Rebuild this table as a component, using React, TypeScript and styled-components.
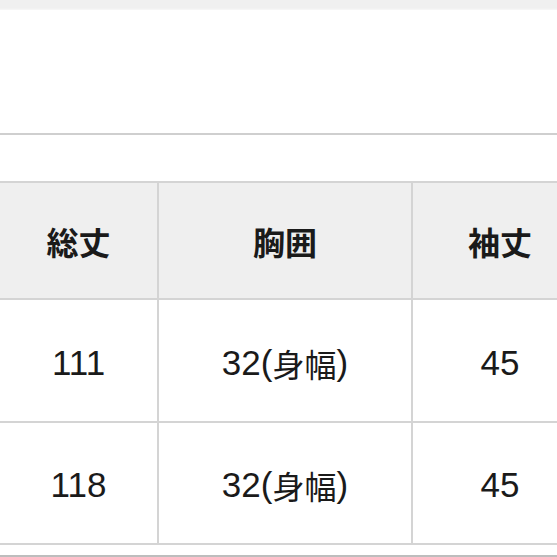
import React from 'react'
import styled, { createGlobalStyle } from 'styled-components'

const GlobalStyle = createGlobalStyle`
  html, body {
    margin: 0;
    padding: 0;
    background: #fff;
    overflow: hidden;
  }
  body {
    font-family: "Liberation Sans", "Noto Sans CJK JP", sans-serif;
    color: #1c1c1c;
  }
`

const Page = styled.div`
  width: 557px;
  height: 557px;
  overflow: hidden;
  display: flex;
  flex-direction: column;
`

const TopBand = styled.div`
  height: 10px;
  background: linear-gradient(#f0f0f0 80%, #f8f8f8);
  flex-shrink: 0;
`

const Space = styled.div<{ $h: number }>`
  height: ${(p) => p.$h}px;
  flex-shrink: 0;
`

const Rule = styled.div<{ $color?: string }>`
  height: 2px;
  background: ${(p) => p.$color || '#cfcfcf'};
  flex-shrink: 0;
`

const Grid = styled.div`
  display: grid;
  grid-template-columns: 157px 252px 174px;
  grid-template-rows: 115px 121px 120px;
  gap: 2px;
  padding: 2px 0;
  background: #d4d4d4;
  width: 587px;
  flex-shrink: 0;
`

const Cell = styled.div<{ $head?: boolean }>`
  display: flex;
  align-items: center;
  justify-content: center;
  background: ${(p) => (p.$head ? '#efefef' : '#ffffff')};
  font-family: ${(p) =>
    p.$head ? '"Noto Sans CJK JP", sans-serif' : '"Liberation Sans", "Noto Sans CJK JP", sans-serif'};
  font-size: ${(p) => (p.$head ? '32px' : '35px')};
  font-weight: ${(p) => (p.$head ? 700 : 400)};
  color: #1a1a1a;
  padding-top: ${(p) => (p.$head ? '1px' : '4px')};
`

const Cjk = styled.span`
  font-family: "Noto Sans CJK JP", sans-serif;
  font-size: 32px;
`

const heads = ['総丈', '胸囲', '袖丈']
const rows = [
  ['111', '32', '45'],
  ['118', '32', '45'],
]

export default function App() {
  return (
    <Page>
      <GlobalStyle />
      <TopBand />
      <Space $h={123} />
      <Rule />
      <Space $h={46} />
      <Grid>
        {heads.map((h) => (
          <Cell key={h} $head>
            {h}
          </Cell>
        ))}
        {rows.map((r, i) => (
          <React.Fragment key={i}>
            <Cell>{r[0]}</Cell>
            <Cell>
              {r[1]}(<Cjk>身幅</Cjk>)
            </Cell>
            <Cell>{r[2]}</Cell>
          </React.Fragment>
        ))}
      </Grid>
      <Space $h={10} />
      <Rule $color="#bdbdbd" />
    </Page>
  )
}
